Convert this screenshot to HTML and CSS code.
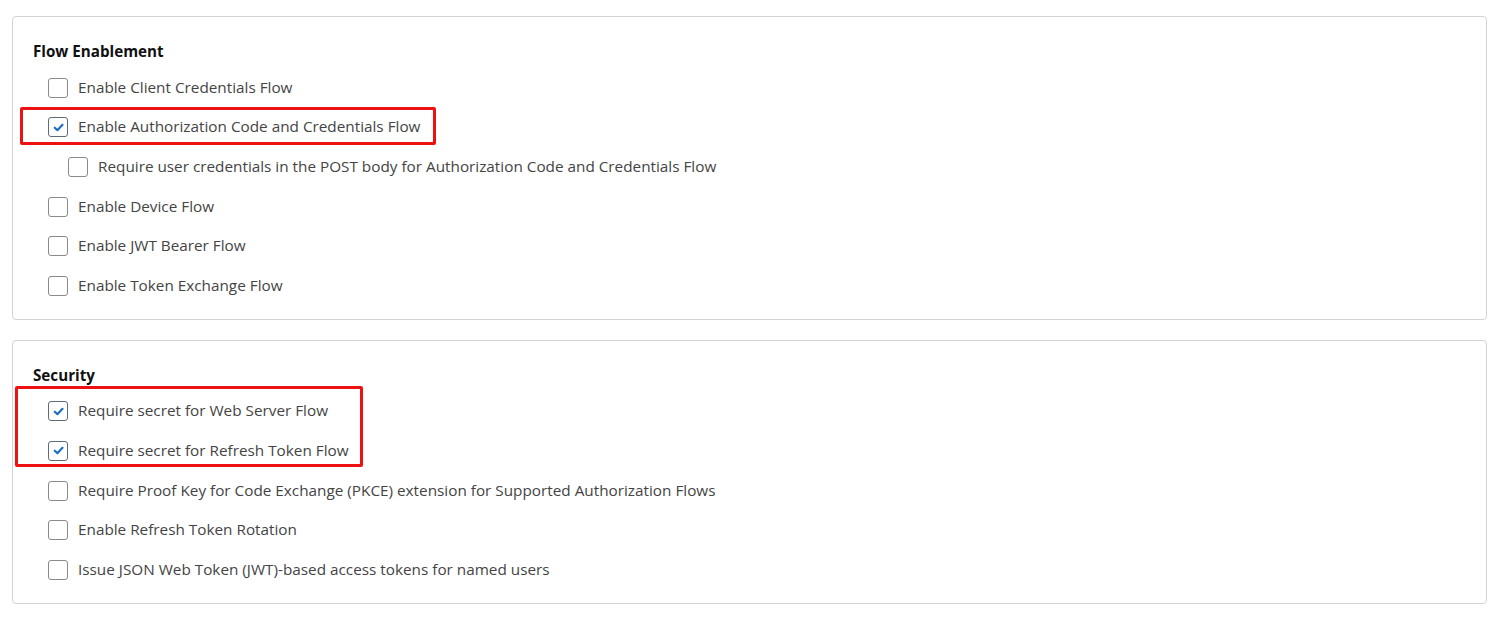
FILE: index.html
```html
<!DOCTYPE html>
<html>
<head>
<meta charset="utf-8">
<link rel="stylesheet" href="styles.css">
</head>
<body>
<div class="page">
  <section class="card">
    <h3 class="card-title">Flow Enablement</h3>
    <div class="rows">
      <label class="row"><span class="cb"></span><span class="lbl">Enable Client Credentials Flow</span></label>
      <label class="row"><span class="cb checked"><svg viewBox="0 0 10 10"><path d="M1.6 5.2 L4 7.4 L8.6 2.6"/></svg></span><span class="lbl">Enable Authorization Code and Credentials Flow</span></label>
      <label class="row nested"><span class="cb"></span><span class="lbl">Require user credentials in the POST body for Authorization Code and Credentials Flow</span></label>
      <label class="row"><span class="cb"></span><span class="lbl">Enable Device Flow</span></label>
      <label class="row"><span class="cb"></span><span class="lbl">Enable JWT Bearer Flow</span></label>
      <label class="row"><span class="cb"></span><span class="lbl">Enable Token Exchange Flow</span></label>
    </div>
    <div class="highlight hl-1"></div>
  </section>
  <section class="card">
    <h3 class="card-title">Security</h3>
    <div class="rows">
      <label class="row"><span class="cb checked"><svg viewBox="0 0 10 10"><path d="M1.6 5.2 L4 7.4 L8.6 2.6"/></svg></span><span class="lbl">Require secret for Web Server Flow</span></label>
      <label class="row"><span class="cb checked"><svg viewBox="0 0 10 10"><path d="M1.6 5.2 L4 7.4 L8.6 2.6"/></svg></span><span class="lbl">Require secret for Refresh Token Flow</span></label>
      <label class="row"><span class="cb"></span><span class="lbl">Require Proof Key for Code Exchange (PKCE) extension for Supported Authorization Flows</span></label>
      <label class="row"><span class="cb"></span><span class="lbl">Enable Refresh Token Rotation</span></label>
      <label class="row"><span class="cb"></span><span class="lbl">Issue JSON Web Token (JWT)-based access tokens for named users</span></label>
    </div>
    <div class="highlight hl-2"></div>
  </section>
</div>
</body>
</html>
```

FILE: styles.css
```css
* { box-sizing: border-box; }
html, body { margin: 0; padding: 0; background: #ffffff; }
body {
  font-family: "Open Sans", "Noto Sans", "Liberation Sans", sans-serif;
  color: #444444;
  font-size: 15.3px;
}
.page {
  padding: 16px 14px 0 12px;
  display: flex;
  flex-direction: column;
  gap: 20px;
}
.card {
  position: relative;
  border: 1px solid #d4d4d4;
  border-radius: 4px;
  padding: 24px 20px 13px 20px;
}
.card-title {
  margin: 0;
  font-size: 15.2px;
  font-weight: 700;
  line-height: 20px;
  color: #111111;
}
.rows {
  display: flex;
  flex-direction: column;
  margin-top: 7px;
}
.row {
  display: flex;
  align-items: center;
  height: 39.6px;
  padding-left: 15px;
  gap: 10px;
}
.row.nested { padding-left: 35px; }
.cb {
  width: 20px;
  height: 20px;
  border: 1px solid #8a8a8a;
  border-radius: 3px;
  background: #fff;
  display: flex;
  align-items: center;
  justify-content: center;
  flex: none;
}
.cb.checked { border-color: #5f6b78; }
.cb svg { width: 11px; height: 11px; }
.cb svg path { fill: none; stroke: #1f6fc0; stroke-width: 2; stroke-linecap: round; stroke-linejoin: round; }
.lbl { line-height: 20px; white-space: nowrap; margin-top: -2px; }
.highlight {
  position: absolute;
  border: 3px solid #ee1111;
  border-radius: 2px;
  pointer-events: none;
}
.hl-1 { left: 7px; top: 90px; width: 416px; height: 38px; }
.hl-2 { left: 2px; top: 45px; width: 348px; height: 81px; }
```
